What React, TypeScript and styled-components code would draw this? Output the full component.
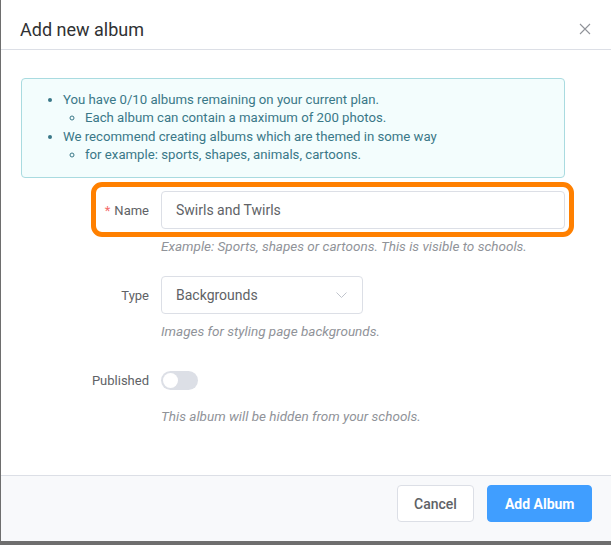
import styled, {createGlobalStyle} from 'styled-components';

const GlobalStyle = createGlobalStyle`
  html, body {
    margin: 0;
    padding: 0;
    background: #6e6e6e;
    overflow: hidden;
    font-family: Roboto, "Liberation Sans", Arial, sans-serif;
  }
`;

const Dialog = styled.div`
  width: 611px;
  height: 541px;
  margin-left: 1px;
  background: #fff;
  display: flex;
  flex-direction: column;
  overflow: hidden;
`;

const Header = styled.div`
  height: 50px;
  box-sizing: border-box;
  padding: 9px 21px 0 19px;
  display: flex;
  align-items: center;
  justify-content: space-between;
  border-bottom: 1px solid #dcdfe6;

  h2 {
    margin: 0;
    font-size: 18px;
    font-weight: 400;
    color: #303133;
  }
`;

const Close = styled.button`
  border: 0;
  background: none;
  padding: 0;
  width: 12px;
  height: 12px;
  display: flex;
  cursor: pointer;
`;

const Body = styled.div`
  flex: 1;
  padding: 28px 47px 0 20px;
`;

const Alert = styled.div`
  background: #f3fdfd;
  border: 1px solid #a9dbe0;
  border-radius: 4px;
  padding: 12px 16px 13px;
  color: #3a7888;
  font-size: 13.2px;
  line-height: 18.3px;
  margin-bottom: 13px;

  ul {
    margin: 0;
    padding-left: 25px;
  }

  ul ul {
    padding-left: 22px;
    list-style: circle;
  }
`;

const Item = styled.div`
  margin-bottom: 21px;
`;

const Row = styled.div`
  display: flex;
  align-items: center;
  position: relative;
  min-height: 38px;
`;

const Label = styled.label<{ $required?: boolean }>`
  width: 140px;
  box-sizing: border-box;
  padding-right: 12px;
  text-align: right;
  font-size: 13px;
  color: #606266;

  &::before {
    content: ${p => (p.$required ? "'*'" : "none")};
    color: #f56c6c;
    margin-right: 4px;
  }
`;

const Input = styled.div<{ $width?: number }>`
  height: 38px;
  box-sizing: border-box;
  border: 1px solid #dcdfe6;
  border-radius: 4px;
  padding: 0 15px 0 14px;
  display: flex;
  align-items: center;
  justify-content: space-between;
  font-size: 14px;
  color: #606266;
  flex: ${p => (p.$width ? '0 0 auto' : '1')};
  width: ${p => (p.$width ? `${p.$width}px` : 'auto')};
`;

const Help = styled.div`
  margin: 8px 0 0 140px;
  font-size: 13.5px;
  line-height: 18px;
  font-style: italic;
  color: #909399;
`;

const Switch = styled.div`
  width: 37px;
  height: 19px;
  border-radius: 10px;
  background: #dcdfe6;
  position: relative;

  &::after {
    content: '';
    position: absolute;
    left: 2px;
    top: 2px;
    width: 15px;
    height: 15px;
    border-radius: 50%;
    background: #fff;
  }
`;

const Highlight = styled.div`
  position: absolute;
  left: 70px;
  top: -9px;
  width: 483px;
  height: 55px;
  box-sizing: border-box;
  border: 5px solid #ff8000;
  border-radius: 11px;
  pointer-events: none;
`;

const Footer = styled.div`
  border-top: 1px solid #dcdfe6;
  background: #f8f9fb;
  padding: 9px 20px 19px;
  display: flex;
  justify-content: flex-end;
  gap: 13px;
`;

const Button = styled.button<{ $primary?: boolean }>`
  height: 37px;
  padding: 0 16.5px;
  border-radius: 4px;
  font-family: inherit;
  font-size: 14px;
  font-weight: ${p => (p.$primary ? 700 : 500)};
  border: 1px solid ${p => (p.$primary ? '#409eff' : '#dcdfe6')};
  background: ${p => (p.$primary ? '#409eff' : '#fff')};
  color: ${p => (p.$primary ? '#fff' : '#606266')};
`;

function App() {
  return (
    <>
      <GlobalStyle/>
      <Dialog>
        <Header>
          <h2>Add new album</h2>
          <Close aria-label="Close">
            <svg width="12" height="12" viewBox="0 0 12 12" fill="none" stroke="#909399" strokeWidth="1.1">
              <path d="M1 1 L11 11 M11 1 L1 11"/>
            </svg>
          </Close>
        </Header>
        <Body>
          <Alert>
            <ul>
              <li>You have 0/10 albums remaining on your current plan.
                <ul>
                  <li>Each album can contain a maximum of 200 photos.</li>
                </ul>
              </li>
              <li>We recommend creating albums which are themed in some way
                <ul>
                  <li>for example: sports, shapes, animals, cartoons.</li>
                </ul>
              </li>
            </ul>
          </Alert>
          <Item>
            <Row>
              <Label $required>Name</Label>
              <Input>Swirls and Twirls</Input>
              <Highlight/>
            </Row>
            <Help>Example: Sports, shapes or cartoons. This is visible to schools.</Help>
          </Item>
          <Item>
            <Row>
              <Label>Type</Label>
              <Input $width={202}>
                Backgrounds
                <svg width="11" height="7" viewBox="0 0 11 7" fill="none" stroke="#c0c4cc" strokeWidth="1">
                  <path d="M0.5 0.5 L5.5 5.5 L10.5 0.5"/>
                </svg>
              </Input>
            </Row>
            <Help>Images for styling page backgrounds.</Help>
          </Item>
          <Item>
            <Row>
              <Label>Published</Label>
              <Switch/>
            </Row>
            <Help>This album will be hidden from your schools.</Help>
          </Item>
        </Body>
        <Footer>
          <Button>Cancel</Button>
          <Button $primary>Add Album</Button>
        </Footer>
      </Dialog>
    </>
  );
}

export default App;
